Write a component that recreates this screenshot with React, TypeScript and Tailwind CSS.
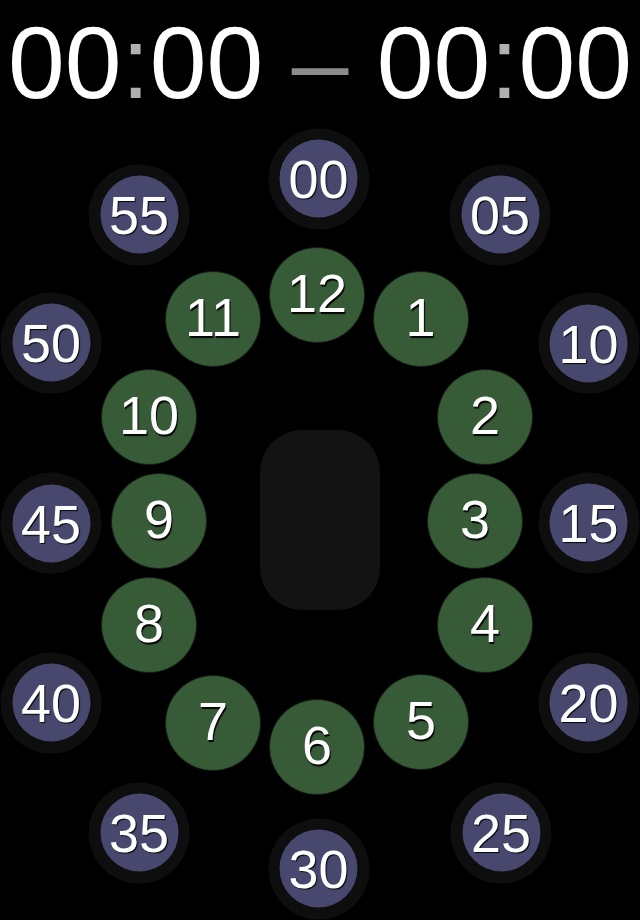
import React from "react";

// canvas top sits right under the title line (12px pad + 102px line)
const TOP = 114;

const minutes = [
  { label: "00", x: 318.5, y: 178.5 },
  { label: "05", x: 500, y: 214.5 },
  { label: "10", x: 588.5, y: 343 },
  { label: "15", x: 588.5, y: 522.5 },
  { label: "20", x: 588.5, y: 702.5 },
  { label: "25", x: 501, y: 832.5 },
  { label: "30", x: 318.5, y: 868.5 },
  { label: "35", x: 139, y: 832.5 },
  { label: "40", x: 51, y: 702.5 },
  { label: "45", x: 51, y: 523 },
  { label: "50", x: 51, y: 342.5 },
  { label: "55", x: 139, y: 214.5 },
];

const hours = [
  { label: "12", x: 317, y: 295 },
  { label: "1", x: 420.5, y: 319 },
  { label: "2", x: 485, y: 416.5 },
  { label: "3", x: 475, y: 520.5 },
  { label: "4", x: 485, y: 625 },
  { label: "5", x: 421, y: 722 },
  { label: "6", x: 317, y: 747 },
  { label: "7", x: 213, y: 723 },
  { label: "8", x: 149, y: 625 },
  { label: "9", x: 159, y: 520.5 },
  { label: "10", x: 149, y: 417 },
  { label: "11", x: 213, y: 319 },
];

const labelCls =
  "text-[54px] leading-none text-white [text-shadow:1px_1.5px_1px_rgba(0,0,0,0.95)]";

const App = () => {
  return (
    <div
      className="w-[640px] h-[920px] bg-black flex flex-col overflow-hidden"
      style={{ fontFamily: '"Liberation Sans", Arial, sans-serif' }}
    >
      <div className="pt-3 flex justify-center text-[102px] leading-none text-white whitespace-pre">
        <span>00</span>
        <span className="text-[#b0b0b0]">:</span>
        <span>00 </span>
        <span className="text-[#8c8c8c]">–</span>
        <span> 00</span>
        <span className="text-[#b0b0b0]">:</span>
        <span>00</span>
      </div>

      <div className="relative flex-1">
        {/* center pad */}
        <div
          className="absolute w-[120px] h-[180px] rounded-[42px] bg-[#131313]"
          style={{ left: 260, top: 430 - TOP }}
        />

        {minutes.map((m) => (
          <div
            key={m.label}
            className="absolute w-[101px] h-[101px] -translate-x-1/2 -translate-y-1/2 rounded-full bg-[#0e0e0e] flex items-center justify-center"
            style={{ left: m.x, top: m.y - TOP }}
          >
            <div className="w-[78px] h-[78px] rounded-full bg-[#48486f] flex items-center justify-center">
              <span className={labelCls}>{m.label}</span>
            </div>
          </div>
        ))}

        {hours.map((h) => (
          <div
            key={h.label + "h"}
            className="absolute w-[94px] h-[94px] -translate-x-1/2 -translate-y-1/2 rounded-full bg-[#375a37] shadow-[0_0_0_1px_#162016] flex items-center justify-center pb-1"
            style={{ left: h.x, top: h.y - TOP }}
          >
            <span className={labelCls}>{h.label}</span>
          </div>
        ))}
      </div>
    </div>
  );
};

export default App;
